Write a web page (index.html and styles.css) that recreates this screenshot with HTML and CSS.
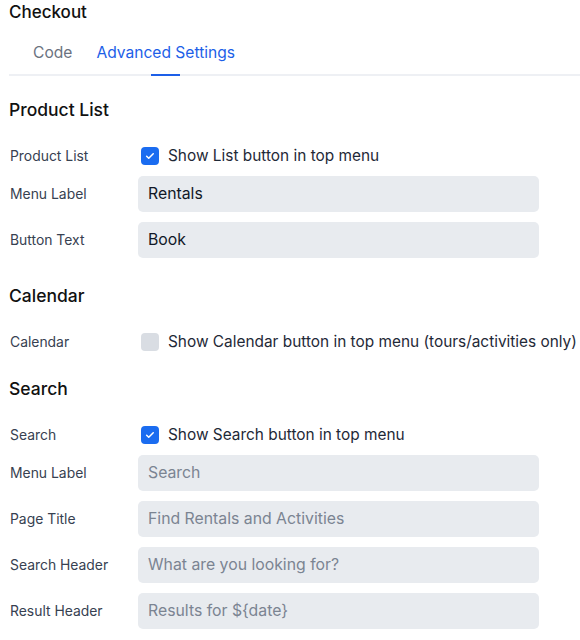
FILE: index.html
```html
<!DOCTYPE html>
<html>
<head>
<meta charset="utf-8">
<link rel="stylesheet" href="styles.css">
</head>
<body>
<div class="page">
  <h1 class="title">Checkout</h1>
  <div class="tabs">
    <div class="tab">Code</div>
    <div class="tab active">Advanced Settings</div>
  </div>

  <h2 class="section first">Product List</h2>
  <div class="row check-row">
    <div class="label">Product List</div>
    <label class="check"><span class="box on"><svg viewBox="0 0 16 16" width="12" height="12"><path d="M3.5 8.3l2.8 2.8 6-6" fill="none" stroke="#fff" stroke-width="2" stroke-linecap="round" stroke-linejoin="round"/></svg></span>Show List button in top menu</label>
  </div>
  <div class="row">
    <div class="label">Menu Label</div>
    <div class="input">Rentals</div>
  </div>
  <div class="row">
    <div class="label">Button Text</div>
    <div class="input">Book</div>
  </div>

  <h2 class="section">Calendar</h2>
  <div class="row check-row">
    <div class="label">Calendar</div>
    <label class="check"><span class="box"></span>Show Calendar button in top menu (tours/activities only)</label>
  </div>

  <h2 class="section">Search</h2>
  <div class="row check-row">
    <div class="label">Search</div>
    <label class="check"><span class="box on"><svg viewBox="0 0 16 16" width="12" height="12"><path d="M3.5 8.3l2.8 2.8 6-6" fill="none" stroke="#fff" stroke-width="2" stroke-linecap="round" stroke-linejoin="round"/></svg></span>Show Search button in top menu</label>
  </div>
  <div class="row">
    <div class="label">Menu Label</div>
    <div class="input placeholder">Search</div>
  </div>
  <div class="row">
    <div class="label">Page Title</div>
    <div class="input placeholder">Find Rentals and Activities</div>
  </div>
  <div class="row">
    <div class="label">Search Header</div>
    <div class="input placeholder">What are you looking for?</div>
  </div>
  <div class="row">
    <div class="label">Result Header</div>
    <div class="input placeholder">Results for ${date}</div>
  </div>
</div>
</body>
</html>
```

FILE: styles.css
```css
* { box-sizing: border-box; }
html, body { margin: 0; padding: 0; background: #fff; }
body {
  font-family: Inter, "Noto Sans", sans-serif;
  color: #111827;
  width: 580px;
  overflow: hidden;
}
.page {
  padding: 0 0 0 9px;
}
.title {
  margin: 0;
  font-size: 17px;
  font-weight: 500;
  line-height: 24px;
  color: #111;
}
.tabs {
  display: flex;
  gap: 24px;
  padding-left: 24px;
  margin-top: 8px;
  border-bottom: 2px solid #eef0f4;
  height: 44px;
}
.tab {
  font-size: 15.6px;
  line-height: 42px;
  color: #6b7280;
  position: relative;
}
.tab.active {
  color: #1d5fe8;
}
.tab.active::after {
  content: "";
  position: absolute;
  left: 55px;
  width: 29px;
  bottom: -2px;
  height: 2px;
  background: #1d5fe8;
}
.section {
  margin: 26px 0 0 0;
  font-size: 17.5px;
  font-weight: 500;
  line-height: 24px;
  color: #111;
}
.section.first { margin-top: 22px; }
.check-row + .section { margin-top: 27px; }
.section + .row { margin-top: 24px; }
.row {
  display: grid;
  grid-template-columns: 129px 401px;
  align-items: center;
  margin-top: 10px;
}
.check-row { height: 18px; }
.check-row + .row { margin-top: 12px; }
.label {
  font-size: 13.9px;
  color: #374151;
  padding-left: 1px;
}
.check {
  display: flex;
  align-items: center;
  font-size: 15.4px;
  color: #1f2937;
  white-space: nowrap;
  gap: 9px;
}
.box {
  width: 18px;
  height: 18px;
  margin-left: 3px;
  border-radius: 4px;
  background: #d9dde3;
  display: flex;
  align-items: center;
  justify-content: center;
  flex: none;
}
.box.on { background: #1a6cf0; }
.input {
  height: 36px;
  border-radius: 5px;
  background: #e8ebef;
  padding-left: 10px;
  font-size: 15.8px;
  line-height: 36px;
  color: #111827;
}
.input.placeholder { color: #7b8492; }
```
